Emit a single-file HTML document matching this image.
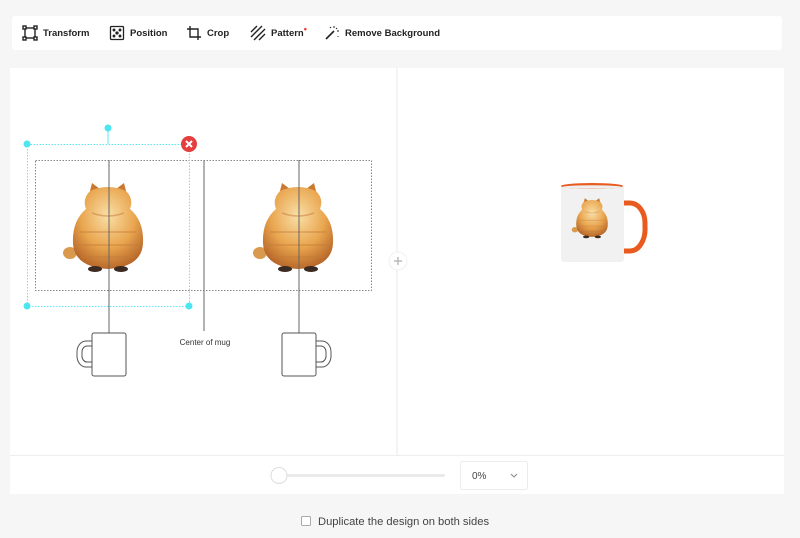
<!DOCTYPE html>
<html><head><meta charset="utf-8"><style>
*{margin:0;padding:0;box-sizing:border-box}
body{width:800px;height:538px;background:#f6f6f6;font-family:"Liberation Sans",sans-serif;position:relative;overflow:hidden}
.tb{position:absolute;left:12px;top:16px;width:770px;height:34px;background:#fff;border-radius:3px}
.it{position:absolute;top:0;height:34px;display:flex;align-items:center;font-size:9.5px;font-weight:bold;color:#222}
.it svg{margin-right:5px}
.panel{position:absolute;left:10px;top:68px;width:774px;height:426px;background:#fff}
</style></head><body>
<div class="tb">
 <div class="it" style="left:10px"><svg width="16" height="16" viewBox="0 0 16 16" fill="none" stroke="#222" stroke-width="1.4"><rect x="3" y="3" width="10" height="10"/><rect x="1" y="1" width="3" height="3" fill="#fff"/><rect x="12" y="1" width="3" height="3" fill="#fff"/><rect x="1" y="12" width="3" height="3" fill="#fff"/><rect x="12" y="12" width="3" height="3" fill="#fff"/></svg>Transform</div>
 <div class="it" style="left:97px"><svg width="16" height="16" viewBox="0 0 16 16" fill="none" stroke="#222" stroke-width="1.3"><rect x="1.5" y="1.5" width="13" height="13" rx="1"/><circle cx="8" cy="8" r="1" fill="#222"/><circle cx="5" cy="5" r=".8" fill="#222"/><circle cx="11" cy="5" r=".8" fill="#222"/><circle cx="5" cy="11" r=".8" fill="#222"/><circle cx="11" cy="11" r=".8" fill="#222"/></svg>Position</div>
 <div class="it" style="left:174px"><svg width="16" height="16" viewBox="0 0 16 16" fill="none" stroke="#222" stroke-width="1.4"><path d="M4 1v11h11M1 4h11v11"/></svg>Crop</div>
 <div class="it" style="left:238px"><svg width="16" height="16" viewBox="0 0 16 16" fill="none" stroke="#222" stroke-width="1.4"><path d="M1 7l6-6M1 12l11-11M4 15l11-11M9 15l6-6"/></svg>Pattern<span style="color:#e33;font-size:9px;position:relative;top:-4px">•</span></div>
 <div class="it" style="left:312px"><svg width="16" height="16" viewBox="0 0 16 16" fill="none" stroke="#222" stroke-width="1.6"><path d="M2 14l8-8"/><path d="M10 1v2M13 3l-1 1M15 6h-2M6 2l1 1M14 11v1" stroke-width="1"/></svg>Remove Background</div>
</div>
<div class="panel"></div>
<svg width="800" height="538" style="position:absolute;left:0;top:0">
 <defs>
  <radialGradient id="g" cx="50%" cy="35%" r="65%"><stop offset="0" stop-color="#f9dfa8"/><stop offset=".6" stop-color="#e9a54e"/><stop offset="1" stop-color="#b9692a"/></radialGradient>
  <g id="cat">
   <ellipse cx="-38" cy="66" rx="7" ry="6" fill="#d99a4e"/>
   <path d="M-19 8 L-16 -4 L-8 2Z M19 8 L16 -4 L8 2Z" fill="#c97a30"/>
   <path d="M-18 4 Q0 -4 18 4 Q26 12 22 22 Q36 34 35 56 Q34 80 0 82 Q-34 80 -35 56 Q-36 34 -22 22 Q-26 12 -18 4Z" fill="url(#g)"/>
   <path d="M-28 45h56M-30 58h60M-27 70h54M-16 26q16 6 32 0" stroke="#c4793a" stroke-width="1.5" fill="none" opacity=".5"/>
   <ellipse cx="-13" cy="82" rx="7" ry="3" fill="#3b2a22"/><ellipse cx="13" cy="82" rx="7" ry="3" fill="#3b2a22"/>
  </g>
  <g id="mug" fill="#fff" stroke="#555" stroke-width="1">
   <path d="M15 8h-6a9 11 0 0 0-9 11v4a9 11 0 0 0 9 11h6" fill="none"/>
   <path d="M15 13h-5a5 6 0 0 0-5 6v4a5 6 0 0 0 5 6h5" fill="none"/>
   <rect x="15" y="0" width="34" height="43" rx="2"/>
  </g>
 </defs>
 <line x1="397" y1="68" x2="397" y2="455" stroke="#e8e8e8"/>
 <line x1="10" y1="455.5" x2="784" y2="455.5" stroke="#eee"/>
 <circle cx="398" cy="261" r="9" fill="#fff" stroke="#f0f0f0"/>
 <path d="M394 261h8M398 257v8" stroke="#bbb" stroke-width="1.5"/>
 <rect x="35.5" y="160.5" width="336" height="130" fill="none" stroke="#888" stroke-dasharray="1.5 1.5"/>
 <use href="#cat" x="108" y="187"/>
 <use href="#cat" x="298" y="187"/>
 <line x1="109" y1="160" x2="109" y2="333" stroke="#666"/>
 <line x1="204" y1="160" x2="204" y2="331" stroke="#666"/>
 <line x1="299" y1="160" x2="299" y2="333" stroke="#666"/>
 <use href="#mug" x="77" y="333"/>
 <g transform="translate(331 333) scale(-1 1)"><use href="#mug"/></g>
 <text x="205" y="345" font-size="8" fill="#333" text-anchor="middle" font-family="Liberation Sans">Center of mug</text>
 <rect x="27.5" y="144.5" width="162" height="162" fill="none" stroke="#5ee8f0" stroke-dasharray="1.5 1.5"/>
 <line x1="108" y1="128" x2="108" y2="144" stroke="#5ee8f0"/>
 <g fill="#4de6f0"><circle cx="108" cy="128" r="3.5"/><circle cx="27" cy="144" r="3.5"/><circle cx="27" cy="306" r="3.5"/><circle cx="189" cy="306" r="3.5"/></g>
 <circle cx="189" cy="144" r="8" fill="#e53e3e"/>
 <path d="M186 141l6 6M192 141l-6 6" stroke="#fff" stroke-width="2"/>
 <path d="M622 203h8a15 20 0 0 1 15 20v4a15 22 0 0 1-15 24h-8" fill="none" stroke="#e85a1e" stroke-width="5"/>
 <rect x="561" y="185" width="63" height="77" rx="3" fill="#f1f1f1"/>
 <ellipse cx="592" cy="186" rx="31" ry="3" fill="#e85a1e"/>
 <ellipse cx="592" cy="187" rx="29" ry="1.8" fill="#eee"/>
 <g transform="translate(592 200) scale(0.45)"><use href="#cat"/></g>
 <rect x="279" y="474" width="166" height="3" rx="1.5" fill="#eaeaea"/>
 <circle cx="279" cy="475.5" r="8" fill="#fff" stroke="#ddd"/>
 <rect x="460.5" y="461.5" width="67" height="28" rx="2" fill="#fff" stroke="#ececec"/>
 <text x="472" y="479" font-size="10" fill="#444" font-family="Liberation Sans">0%</text>
 <path d="M511 474l3 3 3-3" fill="none" stroke="#888"/>
 <rect x="301.5" y="516.5" width="9" height="9" rx="1" fill="#fff" stroke="#aaa"/>
 <text x="318" y="525" font-size="11.2" fill="#444" font-family="Liberation Sans">Duplicate the design on both sides</text>
</svg>
</body></html>
